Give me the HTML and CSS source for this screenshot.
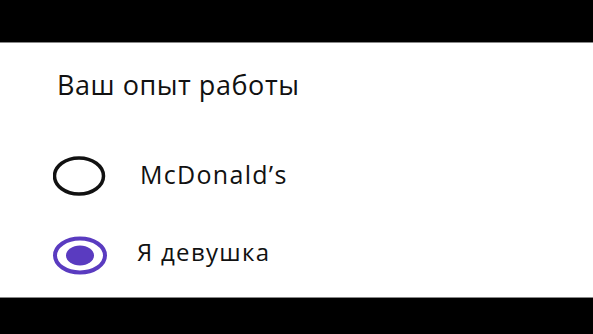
FILE: index.html
```html
<!DOCTYPE html>
<html lang="ru">
<head>
<meta charset="utf-8">
<link rel="stylesheet" href="styles.css">
</head>
<body>
<div class="bar top"></div>
<main class="content">
  <h1 class="title">Ваш опыт работы</h1>
  <div class="option">
    <svg class="radio" width="56" height="40" viewBox="0 0 56 40">
      <ellipse cx="26" cy="20" rx="24.5" ry="18" fill="none" stroke="#111" stroke-width="3.5"/>
    </svg>
    <span class="label label-mc">McDonald’s</span>
  </div>
  <div class="option">
    <svg class="radio" width="56" height="40" viewBox="0 0 56 40">
      <ellipse cx="27" cy="19.5" rx="25" ry="17" fill="none" stroke="#5a3bc0" stroke-width="4"/>
      <ellipse cx="27" cy="19.5" rx="14" ry="10" fill="#5a3bc0"/>
    </svg>
    <span class="label label-girl">Я девушка</span>
  </div>
</main>
<div class="bar bottom"></div>
</body>
</html>
```
FILE: styles.css
```css
html, body {
  margin: 0;
  padding: 0;
  background: #fff;
}
body {
  width: 593px;
  height: 334px;
  overflow: hidden;
  display: flex;
  flex-direction: column;
  font-family: "Open Sans", "Noto Sans", sans-serif;
  color: #111;
}
.bar {
  background: #000;
}
.top {
  height: 42px;
  border-bottom: 1px solid #888;
}
.bottom {
  height: 36px;
  border-top: 1px solid #888;
}
.content {
  flex: 1;
  display: flex;
  flex-direction: column;
  padding: 0 0 0 53px;
}
.title {
  margin: 24px 0 0 4px;
  font-size: 27px;
  font-weight: 400;
  line-height: 36px;
  letter-spacing: 0.55px;
}
.option {
  display: flex;
  align-items: center;
  height: 40px;
}
.title + .option {
  margin-top: 53px;
}
.option + .option {
  margin-top: 40px;
}
.radio {
  flex: none;
}
.label {
  line-height: 32px;
}
.label-mc {
  font-size: 25px;
  margin-left: 31px;
  margin-bottom: 4px;
  letter-spacing: 1.3px;
}
.label-girl {
  font-size: 24px;
  margin-left: 28px;
  margin-bottom: 8px;
  letter-spacing: 1.3px;
}
```
